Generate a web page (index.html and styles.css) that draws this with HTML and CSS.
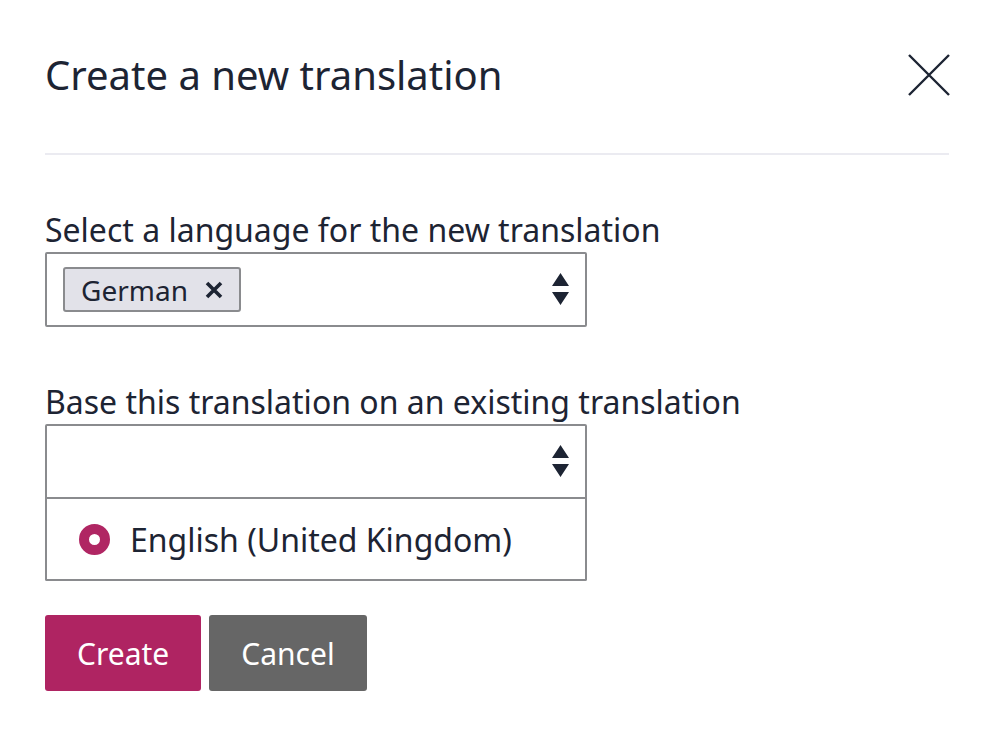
FILE: index.html
```html
<!DOCTYPE html>
<html lang="en">
<head>
<meta charset="utf-8">
<title>Create a new translation</title>
<link rel="stylesheet" href="styles.css">
</head>
<body>
<div class="dialog">
  <div class="header">
    <h1 class="title">Create a new translation</h1>
    <button class="close" aria-label="Close">
      <svg width="42" height="42" viewBox="0 0 42 42"><path d="M1 1L41 41M41 1L1 41" stroke="#1d2433" stroke-width="2.4" fill="none"/></svg>
    </button>
  </div>
  <div class="field first">
    <label class="label">Select a language for the new translation</label>
    <div class="select">
      <span class="tag">German <svg class="tag-x" width="18" height="18" viewBox="0 0 18 18"><path d="M2 2L16 16M16 2L2 16" stroke="#1d2433" stroke-width="3.6" fill="none"/></svg></span>
      <span class="arrows"><svg width="17" height="33" viewBox="0 0 17 33"><path d="M8.5 0L17 13H0Z M0 19H17L8.5 32Z" fill="#1d2433"/></svg></span>
    </div>
  </div>
  <div class="field">
    <label class="label">Base this translation on an existing translation</label>
    <div class="combo">
      <div class="select empty">
        <span class="arrows"><svg width="17" height="33" viewBox="0 0 17 33"><path d="M8.5 0L17 13H0Z M0 19H17L8.5 32Z" fill="#1d2433"/></svg></span>
      </div>
      <div class="options">
        <div class="option"><span class="radio"></span>English (United Kingdom)</div>
      </div>
    </div>
  </div>
  <div class="actions">
    <button class="btn primary">Create</button>
    <button class="btn secondary">Cancel</button>
  </div>
</div>
</body>
</html>
```
FILE: styles.css
```css
* { box-sizing: border-box; }
html, body { margin: 0; background: #fff; }
body {
  font-family: "Noto Sans", "Open Sans", sans-serif;
  color: #1d2433;
}
.dialog { padding: 0 43px 0 45px; }
.header {
  display: flex;
  justify-content: space-between;
  align-items: center;
  height: 155px;
  padding-bottom: 4px;
  border-bottom: 2px solid #ebebf1;
}
.title {
  margin: 0;
  font-size: 40px;
  font-weight: 400;
  line-height: 1.2;
}
.close {
  background: none;
  border: 0;
  padding: 0;
  width: 42px;
  height: 42px;
  margin-right: -1px;
  display: flex;
}
.field { margin-top: 55px; }
.field.first { margin-top: 55px; }
.label {
  display: block;
  font-size: 32px;
  line-height: 40px;
  margin-bottom: 2px;
}
.select {
  width: 542px;
  height: 75px;
  border: 2px solid #8a8b8e;
  border-radius: 2px;
  display: flex;
  align-items: center;
  padding: 0 16px;
}
.tag {
  display: inline-flex;
  align-items: center;
  height: 45px;
  padding: 0 16px 0 16px;
  background: #e2e2e9;
  border: 2px solid #8a8b8e;
  border-radius: 3px;
  font-size: 28px;
  gap: 17px;
}
.tag-x { display: block; }
.arrows { margin-left: auto; display: flex; }
.combo { width: 542px; }
.combo .select {
  border-bottom-left-radius: 0;
  border-bottom-right-radius: 0;
}
.options {
  border: 2px solid #8a8b8e;
  border-top: 0;
  border-radius: 0 0 2px 2px;
  height: 82px;
  display: flex;
  align-items: center;
  padding-left: 32px;
}
.option {
  display: flex;
  align-items: center;
  font-size: 32px;
  gap: 20px;
}
.radio {
  width: 31px;
  height: 31px;
  border-radius: 50%;
  border: 10px solid #b02663;
  background: #fff;
}
.actions {
  display: flex;
  gap: 8px;
  margin-top: 34px;
}
.btn {
  font-family: inherit;
  font-size: 30px;
  color: #fff;
  border: 0;
  border-radius: 3px;
  height: 76px;
  padding: 0 32px;
}
.primary { background: #af2462; }
.secondary { background: #666666; }
```
